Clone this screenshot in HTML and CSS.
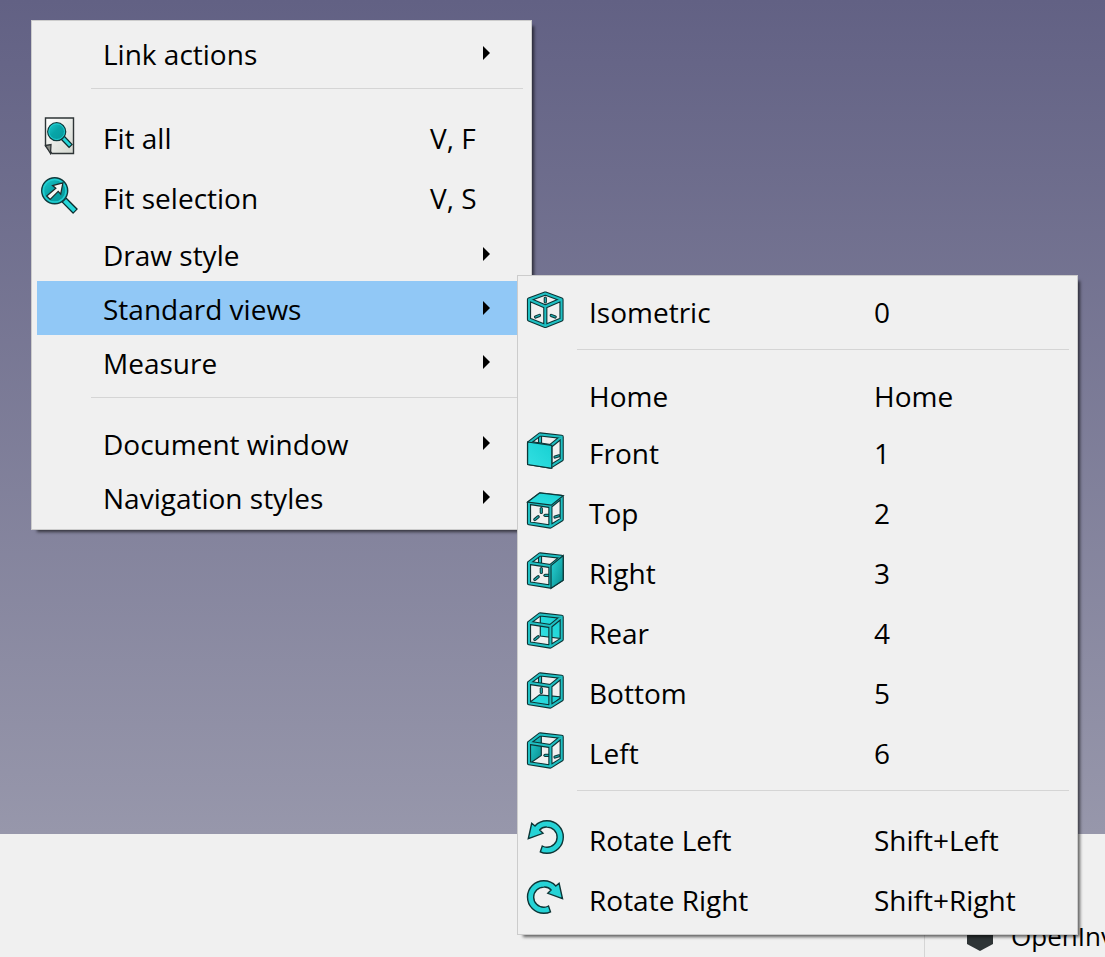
FILE: index.html
```html
<!DOCTYPE html>
<html lang="en">
<head>
<meta charset="utf-8">
<title>Standard views</title>
<link rel="stylesheet" href="styles.css">
</head>
<body>
<svg class="defs" aria-hidden="true">
  <defs>
    <linearGradient id="teal" x1="0" y1="0" x2="1" y2="1"><stop offset="0" stop-color="#2bd8da"/><stop offset="1" stop-color="#06898b"/></linearGradient>
    <linearGradient id="bright" x1="0" y1="1" x2="1" y2="0"><stop offset="0" stop-color="#34e0e2"/><stop offset="1" stop-color="#16d0d2"/></linearGradient>
    <linearGradient id="lens" x1="0" y1="0" x2="1" y2="1"><stop offset="0" stop-color="#20cfd2"/><stop offset=".45" stop-color="#08a5a8"/><stop offset="1" stop-color="#06989a"/></linearGradient>
    <linearGradient id="paper" x1="0" y1="0" x2="1" y2="1"><stop offset="0" stop-color="#ffffff"/><stop offset="1" stop-color="#d3d7cf"/></linearGradient>
    <path id="cube" d="M4 12.8 25.4 16.1V36.6L4 33.2ZM4 12.8 15 4.4 36.7 6.8 25.4 16.1M36.7 6.8V29.4L25.4 36.6"/>
    <path id="hexcube" d="M20.3 4.5 36.5 10.5V30.5L20.3 37 4 30.5V10.5ZM4 10.5 20.3 17.5 36.5 10.5M20.3 17.5V37"/>
    <path id="stub-up" d="M16.3 18.5V22.5"/>
    <path id="stub-left" d="M9.8 29.6 13.2 26.8"/>
    <path id="stub-back" d="M20 25.3H25"/>
    <path id="stub-right" d="M30 27 34 25.8"/>
    <symbol id="frame" viewBox="0 0 40 40"><use href="#cube" class="edge"/><use href="#cube" class="core"/></symbol>
    <path id="turn" d="M3.3 21.7 6.7 6.3 10 9C13 5.5 17 3.7 22 3.7A16.3 16.3 0 0 1 22 36.3Q18 36.3 15.3 34.8L17.3 29Q20 30.4 22 30.3A10 10 0 0 0 22 10.1Q17.5 9.7 14.7 13L18 16.3Z"/>
  </defs>
</svg>

<main class="view">
  <div class="menu menu-context" role="menu" aria-label="View">
    <button class="item" role="menuitem"><span class="label">Link actions</span><span class="arrow"></span></button>
    <hr class="separator">
    <button class="item with-icon" role="menuitem">
      <svg class="icon" viewBox="0 0 40 40"><path d="M6.5 3H34.5V38.5H13L6.5 31Z" fill="url(#paper)" stroke="#2e3436" stroke-width="1.4"/><path d="M6.5 30.5 12 29.5 11.5 38.5Z" fill="#888a85" stroke="#2e3436" stroke-width="1.3"/><path d="M23.5 22.5 32 31.3" stroke="#0b2b2c" stroke-width="5.4"/><path d="M24 23 31.2 30.5" stroke="#25d6d9" stroke-width="3"/><circle cx="17.7" cy="16.7" r="9" fill="url(#lens)" stroke="#103a3c" stroke-width="1.3"/><circle cx="17.7" cy="16.7" r="7.8" fill="none" stroke="#22cfd2" stroke-width="1"/></svg>
      <span class="label">Fit all</span><kbd class="keys">V, F</kbd></button>
    <button class="item with-icon" role="menuitem">
      <svg class="icon" viewBox="0 0 40 40"><path d="M25 24.9 36.5 36.5" stroke="#0b2b2c" stroke-width="6.8"/><path d="M25.5 25.5 35.7 35.7" stroke="#25d6d9" stroke-width="4.2"/><circle cx="15.7" cy="15.7" r="13" fill="url(#lens)" stroke="#103a3c" stroke-width="1.4"/><circle cx="15.7" cy="15.7" r="11.3" fill="none" stroke="#22cfd2" stroke-width="1.5"/><path d="M23.9 7.9 13.6 10.6 16.8 13.2 7.7 21 11.2 24.4 19.2 16.4 21.7 19.1Z" fill="#f8f8f6" stroke="#1c2d2e" stroke-width="1.3"/></svg>
      <span class="label">Fit selection</span><kbd class="keys">V, S</kbd></button>
    <button class="item" role="menuitem"><span class="label">Draw style</span><span class="arrow"></span></button>
    <button class="item is-open" role="menuitem" aria-expanded="true"><span class="label">Standard views</span><span class="arrow"></span></button>
    <button class="item" role="menuitem"><span class="label">Measure</span><span class="arrow"></span></button>
    <hr class="separator">
    <button class="item" role="menuitem"><span class="label">Document window</span><span class="arrow"></span></button>
    <button class="item" role="menuitem"><span class="label">Navigation styles</span><span class="arrow"></span></button>
  </div>

  <div class="menu menu-views" role="menu" aria-label="Standard views">
    <button class="item with-icon" role="menuitem">
      <svg class="icon" viewBox="0 0 40 40"><g class="stub-edge"><path d="M20.3 9V13M10.5 28 14.5 26.4M26.2 26.4 30.2 28"/></g><g class="stub-core"><path d="M20.3 9V13M10.5 28 14.5 26.4M26.2 26.4 30.2 28"/></g><use href="#hexcube" class="edge"/><use href="#hexcube" class="core"/></svg>
      <span class="label">Isometric</span><kbd class="keys">0</kbd></button>
    <hr class="separator">
    <button class="item" role="menuitem"><span class="label">Home</span><kbd class="keys">Home</kbd></button>
    <button class="item with-icon" role="menuitem">
      <svg class="icon" viewBox="0 0 40 40"><path d="M15 5V13" class="edge"/><path d="M15 5V13" class="core"/><use href="#stub-right" class="stub-edge"/><use href="#stub-right" class="stub-core"/><use href="#frame"/><path d="M2.6 12 26.8 15.3V38.3L2.6 34.6Z" fill="url(#bright)" stroke="#0d3536" stroke-width="1.2"/></svg>
      <span class="label">Front</span><kbd class="keys">1</kbd></button>
    <button class="item with-icon" role="menuitem">
      <svg class="icon" viewBox="0 0 40 40"><g class="stub-edge"><use href="#stub-up"/><use href="#stub-left"/><use href="#stub-back"/><use href="#stub-right"/></g><g class="stub-core"><use href="#stub-up"/><use href="#stub-left"/><use href="#stub-back"/><use href="#stub-right"/></g><use href="#frame"/><path d="M2.6 12 14.6 3 38.2 5.6 26.3 15.2Z" fill="url(#bright)" stroke="#0d3536" stroke-width="1.2"/></svg>
      <span class="label">Top</span><kbd class="keys">2</kbd></button>
    <button class="item with-icon" role="menuitem">
      <svg class="icon" viewBox="0 0 40 40"><path d="M15 5V13" class="edge"/><path d="M15 5V13" class="core"/><g class="stub-edge"><use href="#stub-up"/><use href="#stub-left"/><use href="#stub-back"/></g><g class="stub-core"><use href="#stub-up"/><use href="#stub-left"/><use href="#stub-back"/></g><use href="#frame"/><path d="M26 15.6 38.2 5.6V30.3L26 38.3Z" fill="url(#teal)" stroke="#0d3536" stroke-width="1.2"/></svg>
      <span class="label">Right</span><kbd class="keys">3</kbd></button>
    <button class="item with-icon" role="menuitem">
      <svg class="icon" viewBox="0 0 40 40"><path d="M15.3 4V26L36.5 28.5V6.5Z" fill="url(#bright)" stroke="#0d3536" stroke-width="1.2"/><use href="#stub-left" class="stub-edge"/><use href="#stub-left" class="stub-core"/><use href="#frame"/></svg>
      <span class="label">Rear</span><kbd class="keys">4</kbd></button>
    <button class="item with-icon" role="menuitem">
      <svg class="icon" viewBox="0 0 40 40"><path d="M15 5V13" class="edge"/><path d="M15 5V13" class="core"/><use href="#stub-up" class="stub-edge"/><use href="#stub-up" class="stub-core"/><path d="M4 33 14.5 24.8 36.5 27 25.6 36Z" fill="url(#bright)" stroke="#0d3536" stroke-width="1.2"/><use href="#frame"/></svg>
      <span class="label">Bottom</span><kbd class="keys">5</kbd></button>
    <button class="item with-icon" role="menuitem">
      <svg class="icon" viewBox="0 0 40 40"><path d="M4 12.5 16.3 4V25.5L4 34Z" fill="url(#teal)" stroke="#0d3536" stroke-width="1.2"/><g class="stub-edge"><use href="#stub-back"/><use href="#stub-right"/></g><g class="stub-core"><use href="#stub-back"/><use href="#stub-right"/></g><use href="#frame"/></svg>
      <span class="label">Left</span><kbd class="keys">6</kbd></button>
    <hr class="separator">
    <button class="item with-icon" role="menuitem">
      <svg class="icon" viewBox="0 0 40 40"><use href="#turn" fill="#25d3d6" stroke="#0d3536" stroke-width="1.4"/></svg>
      <span class="label">Rotate Left</span><kbd class="keys">Shift+Left</kbd></button>
    <button class="item with-icon" role="menuitem">
      <svg class="icon" viewBox="0 0 40 40"><use href="#turn" transform="translate(40.8 0) scale(-1 1)" fill="#25d3d6" stroke="#0d3536" stroke-width="1.4"/></svg>
      <span class="label">Rotate Right</span><kbd class="keys">Shift+Right</kbd></button>
  </div>
</main>

<footer class="status">
  <button class="navigation"><svg class="hexagon" viewBox="0 0 26 30"><path d="M13 0 26 7V23L13 30 0 23V7Z" fill="#2e3436"/></svg>OpenInv</button>
</footer>
</body>
</html>
```
FILE: styles.css
```css
* {
  box-sizing: border-box;
}

body {
  margin: 0;
  min-height: 100vh;
  display: flex;
  flex-direction: column;
  overflow: hidden;
  font-family: "Open Sans", "Noto Sans", sans-serif;
  font-size: 28px;
  color: #000;
  background: #f0f0f0;
}

button,
kbd {
  font: inherit;
  color: inherit;
}

.defs {
  position: absolute;
  width: 0;
  height: 0;
}

.view {
  flex: 1;
  background: linear-gradient(#626184, #9797ab);
}

.menu {
  position: absolute;
  padding: 5px;
  border: 1px solid #ccc;
  background: #f0f0f0;
  box-shadow: 4px 4px 3px -2px rgba(0, 0, 0, 0.6);
}

.menu-context {
  left: 31px;
  top: 20px;
  width: 501px;
  --keys: 96px;
}

.menu-views {
  left: 517px;
  top: 275px;
  width: 561px;
  --keys: 198px;
}

.item {
  display: grid;
  grid-template-columns: 66px 1fr var(--keys);
  align-items: center;
  width: 100%;
  height: 54px;
  padding: 0;
  border: 0;
  background: none;
  text-align: left;
  white-space: nowrap;
}

.with-icon {
  height: 60px;
}

.is-open {
  background: #91c8f6;
}

.icon {
  grid-column: 1;
  width: 40px;
  height: 40px;
  margin: 0 0 4px 2px;
  fill: none;
}

.label {
  grid-column: 2;
  padding-top: 2px;
}

.keys {
  grid-column: 3;
  padding-top: 2px;
}

.arrow {
  grid-column: 3;
  width: 7px;
  height: 14px;
  margin-left: 53px;
  background: #000;
  clip-path: polygon(0 0, 100% 50%, 0 100%);
}

.separator {
  height: 1px;
  margin: 8px 3px 18px 54px;
  border: 0;
  background: #d5d5d5;
}

.edge {
  fill: none;
  stroke: #0d3536;
  stroke-width: 4.2;
  stroke-linejoin: round;
}

.core {
  fill: none;
  stroke: #1fc0c3;
  stroke-width: 2;
  stroke-linejoin: round;
}

.stub-edge {
  fill: none;
  stroke: #0d3536;
  stroke-width: 3.2;
  stroke-linecap: round;
}

.stub-core {
  fill: none;
  stroke: #1fb0b3;
  stroke-width: 1.2;
  stroke-linecap: round;
}

.status {
  display: flex;
  justify-content: flex-end;
  align-items: flex-end;
  height: 123px;
}

.navigation {
  display: flex;
  align-items: center;
  gap: 18px;
  width: 181px;
  height: 42px;
  padding: 0 0 0 42px;
  border: 0;
  border-left: 1px solid #d5d5d5;
  background: none;
  font-size: 26px;
  white-space: nowrap;
}

.hexagon {
  flex: none;
  width: 26px;
  height: 30px;
}
```
